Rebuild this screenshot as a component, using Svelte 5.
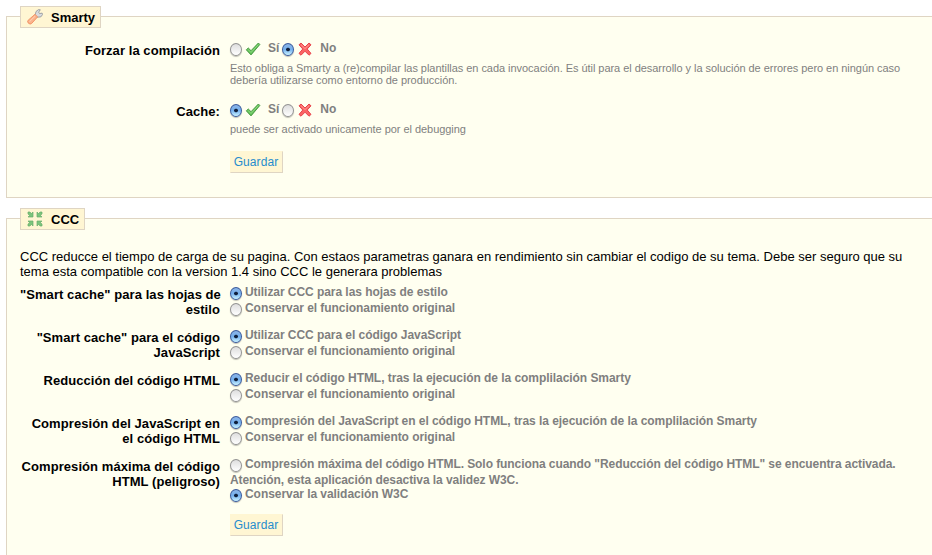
<script>
	let smarty = $state([
		{
			name: 'force_compile',
			label: 'Forzar la compilación',
			value: 'no',
			hint: [
				'Esto obliga a Smarty a (re)compilar las plantillas en cada invocación. Es útil para el desarrollo y la solución de errores pero en ningún caso',
				'debería utilizarse como entorno de producción.'
			]
		},
		{
			name: 'cache',
			label: 'Cache:',
			value: 'yes',
			hint: ['puede ser activado unicamente por el debugging']
		}
	]);

	let ccc = $state([
		{
			name: 'css',
			label: ['"Smart cache" para las hojas de', 'estilo'],
			value: 0,
			options: [['Utilizar CCC para las hojas de estilo'], ['Conservar el funcionamiento original']]
		},
		{
			name: 'js',
			label: ['"Smart cache" para el código', 'JavaScript'],
			value: 0,
			options: [['Utilizar CCC para el código JavaScript'], ['Conservar el funcionamiento original']]
		},
		{
			name: 'html',
			label: ['Reducción del código HTML'],
			value: 0,
			options: [
				['Reducir el código HTML, tras la ejecución de la complilación Smarty'],
				['Conservar el funcionamiento original']
			]
		},
		{
			name: 'inline_js',
			label: ['Compresión del JavaScript en', 'el código HTML'],
			value: 0,
			options: [
				['Compresión del JavaScript en el código HTML, tras la ejecución de la complilación Smarty'],
				['Conservar el funcionamiento original']
			]
		},
		{
			name: 'high',
			label: ['Compresión máxima del código', 'HTML (peligroso)'],
			value: 1,
			options: [
				[
					'Compresión máxima del código HTML. Solo funciona cuando "Reducción del código HTML" se encuentra activada.',
					'Atención, esta aplicación desactiva la validez W3C.'
				],
				['Conservar la validación W3C']
			]
		}
	]);
</script>

{#snippet lines(list)}
	{#each list as line, i}{#if i > 0}<br />{/if}{line}{/each}
{/snippet}

{#snippet check()}
	<svg class="mark" viewBox="0 0 16 16">
		<path d="M1.3 8.8l2-1.8 2.7 2.7L13.4 2l1.4 1.5L6 13.9z" fill="#5fbf55" stroke="#4b9a46" stroke-linejoin="round" />
		<path d="M3 8.4l3 3.1 7.4-8" fill="none" stroke="#8fdc80" />
	</svg>
{/snippet}

{#snippet cross()}
	<svg class="mark" viewBox="0 0 16 16">
		<path d="M2 3.8L4 2l4 4 4-4 2 1.8L10.2 8l3.8 4.4-2 1.8L8 10.2 4 14.2l-2-1.8L5.8 8z" fill="#fa6464" stroke="#e8434b" stroke-linejoin="round" />
		<path d="M4 3.7l4 3.9 4-3.9" fill="none" stroke="#ff9a91" />
	</svg>
{/snippet}

<form class="page" onsubmit={(e) => e.preventDefault()}>
	<section class="panel smarty">
		<h2 class="legend">
			<svg viewBox="0 0 16 16">
				<path d="M8.2 6.2L9 2.5 11.5.6l1.8.2-1.6 2.3.8 1.5 2.6-.5.5 1.4-1.8 2.4-3.6.3z" fill="#d9dcdf" stroke="#8e9297" stroke-width=".8" />
				<path d="M8 5.3l2.6 2.6-6 6.6q-1.4 1.2-3.1-.2-1.6-1.8-.3-3.1z" fill="#fbb38c" stroke="#f08f60" stroke-width=".9" />
				<path d="M8.1 7.2l-5.6 5.4" stroke="#ffd2b5" fill="none" />
			</svg>
			<span>Smarty</span>
		</h2>
		{#each smarty as row}
			<div class="row">
				<div class="label">{row.label}</div>
				<div class="field">
					<div class="switch">
						<label><input type="radio" name={row.name} value="yes" bind:group={row.value} />{@render check()}<span>Sí</span></label>
						<label><input type="radio" name={row.name} value="no" bind:group={row.value} />{@render cross()}<span>No</span></label>
					</div>
					<p class="hint">{@render lines(row.hint)}</p>
				</div>
			</div>
		{/each}
		<button class="save">Guardar</button>
	</section>

	<section class="panel ccc">
		<h2 class="legend">
			<svg viewBox="0 0 16 16">
				{#each [0, 90, 180, 270] as angle}
					<path d="M1 1h2l1.3 1.6L6 1v5H1l1.6-1.6L1 3z" transform="rotate({angle} 8 8)" fill="#7cc47c" stroke="#68ad6c" stroke-width=".7" />
				{/each}
			</svg>
			<span>CCC</span>
		</h2>
		<p class="intro">
			CCC reducce el tiempo de carga de su pagina. Con estaos parametras ganara en rendimiento sin cambiar el codigo de su tema. Debe ser seguro que su<br />
			tema esta compatible con la version 1.4 sino CCC le generara problemas
		</p>
		{#each ccc as row}
			<div class="row">
				<div class="label">{@render lines(row.label)}</div>
				<div class="field">
					{#each row.options as option, i}
						<label class="option" class:long={option.length > 1}><input type="radio" name={row.name} value={i} bind:group={row.value} />{@render lines(option)}</label>
					{/each}
				</div>
			</div>
		{/each}
		<button class="save">Guardar</button>
	</section>
</form>

<style>
	:global(body) {
		margin: 0;
		overflow: hidden;
		background: #fff;
	}

	.page {
		height: 555px;
		padding: 16px 0 0 6px;
		box-sizing: border-box;
		overflow: hidden;
		font: 13px/15px 'Liberation Sans', Arial, sans-serif;
		color: #000;
		white-space: nowrap;
	}

	.panel {
		box-sizing: border-box;
		border: 1px solid #dfd5c3;
		border-right: none;
		background: #fffff0;
		padding-left: 13px;
	}

	.smarty {
		height: 182px;
	}

	.ccc {
		height: 360px;
		margin-top: 20px;
	}

	.legend {
		display: flex;
		align-items: center;
		width: fit-content;
		height: 22px;
		box-sizing: border-box;
		margin: -11px 0 0;
		padding: 0 5px 0 6px;
		border: 1px solid #dfd5c3;
		background: #fff6d3;
		font-size: 13px;
		font-weight: bold;
	}

	.legend svg {
		width: 16px;
		height: 16px;
		margin-right: 8px;
	}

	.row {
		display: grid;
		grid-template-columns: 200px 1fr;
		column-gap: 10px;
	}

	.label {
		text-align: right;
		font-weight: bold;
		letter-spacing: 0.07px;
	}

	.smarty .row {
		margin-top: 14px;
	}

	.smarty .row + .row {
		margin-top: 17px;
	}

	.smarty .label {
		padding-top: 1px;
	}

	.switch {
		display: flex;
		height: 20px;
	}

	.switch label {
		display: flex;
		align-items: flex-start;
		margin-right: 3px;
		font-size: 12px;
		font-weight: bold;
		color: #7f7f7f;
	}

	.switch span {
		margin-left: 7px;
		line-height: 13px;
	}

	.mark {
		width: 16px;
		height: 16px;
		margin: -1px 0 0 2px;
	}

	input {
		appearance: none;
		flex: none;
		width: 12px;
		height: 13px;
		margin: 1px 1px 0 0;
		box-sizing: border-box;
		border: 1px solid #929292;
		border-radius: 50%;
		background: linear-gradient(#dedede, #eee 50%, #fff);
		box-shadow: 0 1px 1px rgba(0, 0, 0, 0.25);
	}

	input:checked {
		border-color: #3a5a9c;
		background: radial-gradient(circle at 50% 50%, #10203c 0 1.5px, transparent 2.2px), linear-gradient(#8cb4e6, #74b0ee 50%, #c9f2ff);
	}

	.hint {
		margin: 0;
		font-size: 11px;
		line-height: 12px;
		letter-spacing: -0.043px;
		color: #7f7f7f;
	}

	.save {
		display: block;
		width: 53px;
		height: 22px;
		margin: 16px 0 0 210px;
		padding: 0 1px 0 0;
		border: 1px solid #fff6d3;
		border-right-color: #dfd5c3;
		border-bottom-color: #dfd5c3;
		background: #fff6d3;
		font: 12px 'Liberation Sans', Arial, sans-serif;
		letter-spacing: 0.1px;
		color: #268ccd;
	}

	.intro {
		margin: 19px 0 5px;
	}

	.ccc .row {
		height: 43px;
	}

	.ccc .label {
		padding-top: 3px;
	}

	.option {
		display: block;
		font-size: 12px;
		font-weight: bold;
		line-height: 16px;
		letter-spacing: -0.055px;
		color: #7f7f7f;
	}

	.option.long {
		height: 30px;
		letter-spacing: -0.072px;
	}

	.option input {
		vertical-align: top;
		margin: 3px 3px 0 0;
	}

	.ccc .save {
		margin-top: 15px;
	}
</style>
